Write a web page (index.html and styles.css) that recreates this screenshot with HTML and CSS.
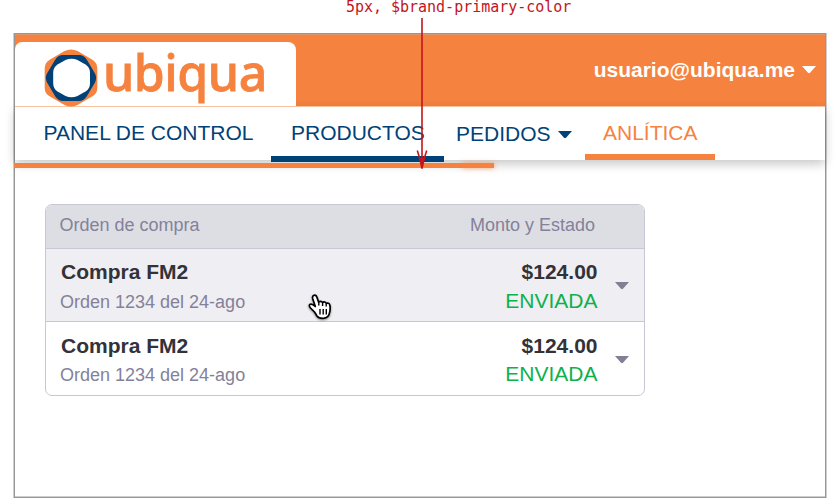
FILE: index.html
```html
<!DOCTYPE html>
<html lang="es">
<head>
<meta charset="utf-8">
<title>Ubiqua</title>
<link rel="stylesheet" href="styles.css">
</head>
<body>
<div class="note">5px, $brand-primary-color</div>
<div class="frame">
  <header class="header">
    <div class="brand">
      <svg class="mark" width="54" height="58" viewBox="0 0 54 58">
        <path d="M20.500 2Q27 -1.200 33.500 2L48 10.400Q53.300 13.400 53.300 19V39Q53.300 44.600 48 47.600L33.500 56Q27 59.200 20.500 56L6 47.600Q.7 44.600 .7 39V19Q.7 13.400 6 10.400Z" fill="#f5833f"/>
        <path d="M19 6H35Q40 6 43 11L51 24.500Q53.300 29 51 33.500L43 47Q40 52 35 52H19Q14 52 11 47L3 33.500Q.7 29 3 24.500L11 11Q14 6 19 6Z" fill="#004278"/>
        <path d="M21.500 11Q27.500 8.300 33.500 11L41.500 15.500Q46 18.500 46 23.500V34.500Q46 39.500 41.500 42.500L33.500 47Q27.500 49.700 21.500 47L13.500 42.500Q9.200 39.500 9.200 34.500V23.500Q9.200 18.500 13.500 15.500Z" fill="#fff"/>
      </svg>
      <span class="wordmark">ubiqua</span>
    </div>
    <div class="user">usuario@ubiqua.me<svg width="14" height="8" viewBox="0 0 14 8"><path d="M0 0H14L8 6.800Q7 7.700 6 6.800Z" fill="#fff"/></svg></div>
  </header>
  <nav class="nav">
    <a class="item panel">PANEL DE CONTROL</a>
    <a class="item products">PRODUCTOS</a>
    <a class="item orders">PEDIDOS<svg width="14" height="8" viewBox="0 0 14 8"><path d="M0 0H14L8 6.800Q7 7.700 6 6.800Z" fill="#004278"/></svg></a>
    <a class="item analytics">ANLÍTICA</a>
  </nav>
  <div class="progress"></div>
  <section class="table">
    <div class="thead"><span>Orden de compra</span><span>Monto y Estado</span></div>
    <div class="row active">
      <div class="order"><strong>Compra FM2</strong><span>Orden 1234 del 24-ago</span></div>
      <div class="amount"><strong>$124.00</strong><span>ENVIADA</span></div>
      <svg width="14" height="8" viewBox="0 0 14 8"><path d="M0 0H14L8 6.800Q7 7.700 6 6.800Z" fill="#827f93"/></svg>
    </div>
    <div class="row last">
      <div class="order"><strong>Compra FM2</strong><span>Orden 1234 del 24-ago</span></div>
      <div class="amount"><strong>$124.00</strong><span>ENVIADA</span></div>
      <svg width="14" height="8" viewBox="0 0 14 8"><path d="M0 0H14L8 6.800Q7 7.700 6 6.800Z" fill="#827f93"/></svg>
    </div>
  </section>
</div>
<svg class="arrow" width="14" height="154" viewBox="0 0 14 154"><path d="M7 1V151M2.300 133.500Q5 141 7 151.500Q9 141 11.700 133.500" fill="none" stroke="#c3161c" stroke-width="1.600"/><path d="M5 141L7 152L9 141Z" fill="#c3161c"/></svg>
<svg class="hand" width="28" height="30" viewBox="0 0 28 30"><path d="M8.500 18L4.500 14Q2.300 11.400 4.200 10.200Q6.300 9.500 9.300 12.500L6.800 5Q5.900 2 8 1.300Q10.200 .8 11.200 4L12.600 8.200Q14.800 6.300 16.600 8.600Q18.900 7 20.200 9.400Q23.500 8.200 24 11.800Q24.600 16 23.200 20Q22 23.700 18 24.200Q13 24.700 11 22Q9.800 20 8.500 18Z" fill="#fff" stroke="#000" stroke-width="1.700" stroke-linejoin="round"/><path d="M12.800 8.500V11.500M16.600 9V12M20.200 10V12.500M14 15V20.500M17.200 15V20.500M20.300 15V20.500" stroke="#000" stroke-width="1.400"/></svg>
</body>
</html>
```
FILE: styles.css
```css
* { box-sizing: border-box; }
body {
  margin: 0;
  width: 840px;
  height: 498px;
  overflow: hidden;
  background: #fff;
  font-family: "Liberation Sans", Arial, sans-serif;
}
svg { display: block; flex: none; }
.note {
  height: 33px;
  padding-left: 346px;
  font: 15px/15px "DejaVu Sans Mono", monospace;
  letter-spacing: -0.02px;
  color: #c3161c;
  white-space: nowrap;
}
.frame {
  width: 812px;
  height: 465px;
  margin-left: 14px;
  border: 1px solid #969696;
  box-shadow: -1px 0 #cfcfcf, 1px 0 #cfcfcf, inset 0 -1px #cfcfcf;
}
.header {
  display: flex;
  justify-content: space-between;
  height: 72px;
  background: #f5833f;
  border-top: 1px solid #d9986d;
}
.brand {
  display: flex;
  width: 281px;
  height: 64px;
  margin-top: 7px;
  padding-left: 29px;
  background: #fff;
  border-radius: 7px 8px 0 0;
}
.mark { margin-top: 7px; position: relative; z-index: 2; }
.wordmark {
  margin: -5px 0 0 5px;
  font: 500 50px/70px "Noto Sans", sans-serif;
  letter-spacing: -0.5px;
  color: #f5833f;
  -webkit-text-stroke: 0.8px #f5833f;
}
.user {
  display: flex;
  align-items: center;
  gap: 7px;
  height: 70px;
  padding-right: 9px;
  font-size: 21px;
  font-weight: bold;
  color: #fff;
}
.nav {
  display: flex;
  height: 54px;
  background: #fff;
  border-top: 1px solid #f9c3a2;
  box-shadow: 0 4px 10px rgba(0, 0, 0, .22);
}
.item {
  display: flex;
  height: 55px;
  padding-top: 14px;
  font-size: 21px;
  line-height: 24px;
  color: #004278;
  white-space: nowrap;
}
.panel { width: 256px; padding-left: 28.500px; }
.products { width: 173px; padding-left: 20px; border-bottom: 6px solid #004278; }
.orders { width: 141px; padding: 15px 0 0 12px; gap: 7px; }
.orders svg { margin-top: 9px; }
.analytics { width: 130px; height: 53px; padding-left: 18px; color: #f5833f; border-bottom: 6px solid #f5833f; }
.progress {
  width: 480px;
  height: 5px;
  margin: 3px 0 0 -1px;
  background: #f5833f;
  position: relative;
}
.progress::after {
  content: "";
  display: block;
  width: 32px;
  height: 5px;
  margin-left: auto;
  box-shadow: 0 0 5px rgba(245, 131, 63, .7);
}
.table {
  width: 600px;
  height: 192px;
  margin: 36px 0 0 30px;
  border: 1.500px solid #c8c7d6;
  border-radius: 7px;
  overflow: hidden;
}
.thead {
  display: flex;
  justify-content: space-between;
  height: 43px;
  padding: 0 49px 0 13.500px;
  font-size: 18px;
  line-height: 40px;
  color: #84819a;
  background: #dddee4;
}
.row {
  display: flex;
  height: 73px;
  padding: 0 15px;
  border-top: 1.500px solid #c8c7d6;
}
.row.last { height: 74px; }
.row.active { background: #efeef3; }
.order, .amount { display: flex; flex-direction: column; }
.order { flex: 1; }
.amount { align-items: flex-end; margin-right: 17.500px; }
.row strong { margin-top: 11px; font-size: 21px; line-height: 24px; color: #333238; }
.order span { margin: 7px 0 0 -1px; font-size: 18px; line-height: 22px; color: #84819a; }
.amount span { margin-top: 5px; font-size: 21px; line-height: 24px; color: #0eb14b; }
.row svg { margin-top: 33px; }
.row.last strong { margin-top: 12px; }
.row.last .order span { margin-top: 6px; }
.row.last .amount span { margin-top: 4px; }
.row.last svg { margin-top: 34px; }
.arrow { position: absolute; left: 415px; top: 17px; z-index: 3; }
.hand { position: absolute; left: 306px; top: 294px; filter: drop-shadow(0 1px 1px rgba(0, 0, 0, .45)); }
```
